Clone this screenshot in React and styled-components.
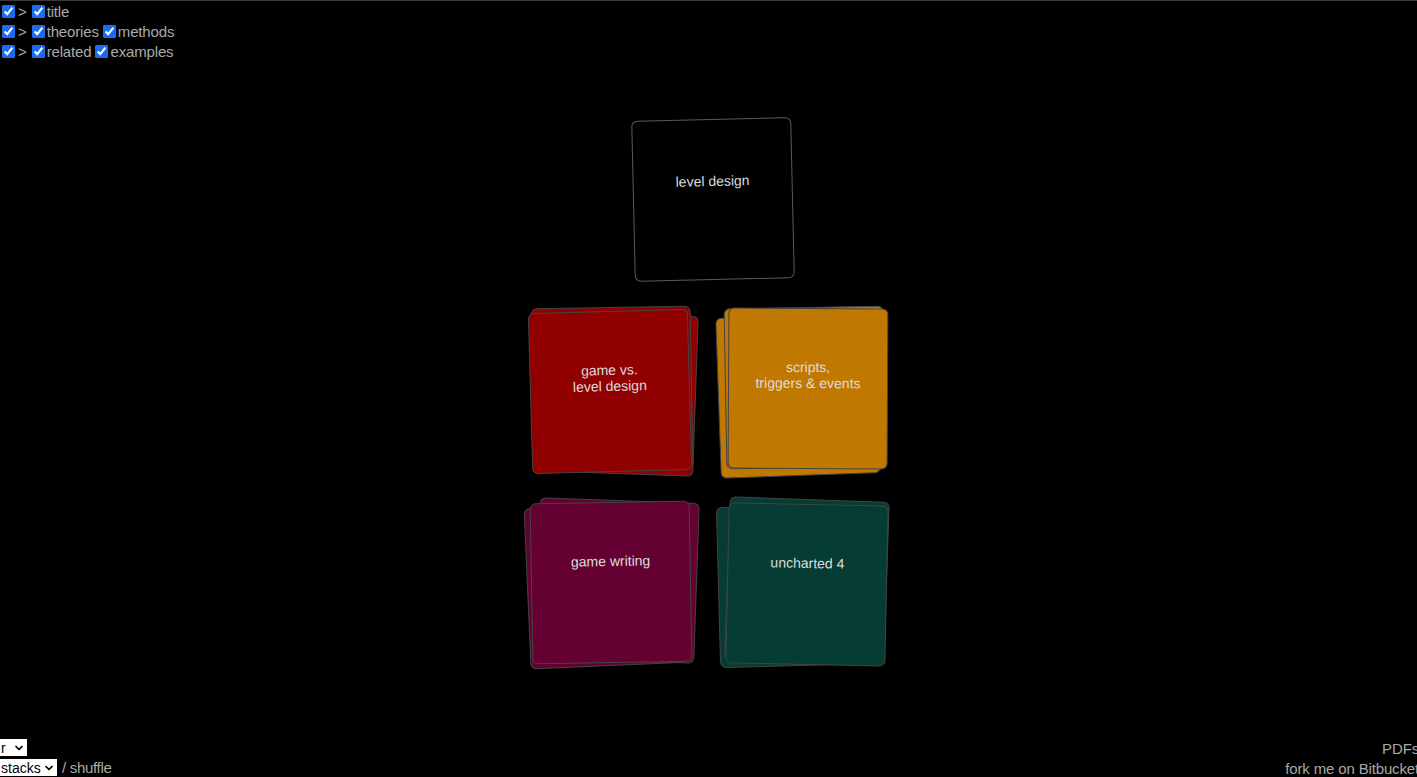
import React from "react";
import styled, { createGlobalStyle } from "styled-components";
import { ChevronDown } from "lucide-react";

const GlobalStyle = createGlobalStyle`
  html, body {
    margin: 0;
    padding: 0;
    background: #000;
  }
  body {
    font-family: "Liberation Sans", Arial, Helvetica, sans-serif;
    overflow: hidden;
  }
`;

const Page = styled.div`
  height: 100vh;
  box-sizing: border-box;
  border-top: 1px solid #3a3a3a;
  display: flex;
  flex-direction: column;
  overflow: hidden;
  color: #aaa;
  font-size: 15px;
`;

const Filters = styled.div`
  display: flex;
  flex-direction: column;
`;

const FilterRow = styled.div`
  display: flex;
  align-items: center;
  height: 20px;
  letter-spacing: -0.15px;
`;

const Check = styled.input.attrs({ type: "checkbox" })`
  width: 13px;
  height: 13px;
  margin: 0 2px 0 2px;
  accent-color: #1a6cf5;
`;

const Arrow = styled.span`
  margin: 0 3px 0 1px;
`;

const Label = styled.label`
  display: inline-flex;
  align-items: center;
  margin-right: 2px;
`;

const Board = styled.div`
  margin-top: 58px;
  display: flex;
  flex-direction: column;
  align-items: center;
  gap: 30px;
`;

const Grid = styled.div`
  display: grid;
  grid-template-columns: 160px 160px;
  column-gap: 31px;
  row-gap: 31px;
`;

const Stack = styled.div`
  position: relative;
  width: 160px;
  height: 161px;
`;

const Card = styled.div`
  box-sizing: border-box;
  width: 160px;
  height: 161px;
  border-radius: 6px;
  border: 1px solid ${p => (p.$bg ? "#444" : "#5a5a5a")};
  background: ${p => p.$bg || "#000"};
  color: #dcdcdc;
  font-size: 14px;
  line-height: 16px;
  text-align: center;
  padding: ${p => (p.$bg ? "50px" : "53px")} 8px 0;
  transform: ${p => p.$t || "none"};
`;

const StackCard = styled(Card)`
  position: absolute;
  inset: 0;
`;

const Bottom = styled.div`
  margin-top: auto;
  display: flex;
  justify-content: space-between;
  align-items: flex-end;
`;

const Left = styled.div`
  display: flex;
  flex-direction: column;
  gap: 3px;
  padding-bottom: 1px;
`;

const SelectRow = styled.div`
  display: flex;
  align-items: center;
  height: 17px;
  letter-spacing: -0.3px;
`;

const SelectBox = styled.div`
  position: relative;
  display: inline-flex;
  align-items: center;
  background: #fff;
  height: 17px;
  margin-right: 5px;

  svg {
    position: absolute;
    right: 2px;
    pointer-events: none;
    color: #000;
  }
`;

const Select = styled.select`
  appearance: none;
  border: none;
  background: transparent;
  color: #000;
  font-family: "Liberation Sans", Arial, sans-serif;
  font-size: 14px;
  height: 17px;
  min-width: ${p => p.$min || "0"};
  padding: 0 16px 0 1px;
  outline: none;
`;

const Right = styled.div`
  display: flex;
  flex-direction: column;
  align-items: flex-end;
  margin-right: -2px;
  margin-bottom: -2px;
  line-height: 20px;
  letter-spacing: -0.15px;
  color: #a8a8a8;
`;

const filters = [
  ["title"],
  ["theories", "methods"],
  ["related", "examples"]
];

const stacks = [
  {
    bg: "#910000",
    text: ["game vs.", "level design"],
    layers: ["translate(3px,3px) rotate(2deg)", "translate(-1px,-3px) rotate(-1deg)", "translate(-3px,1px) rotate(-1.6deg)"]
  },
  {
    bg: "#c17800",
    text: ["scripts,", "triggers & events"],
    layers: ["translate(-6px,5px) rotate(-2deg)", "translate(1px,-3px) rotate(-1deg)", "translate(4px,-2px) rotate(0.3deg)"]
  },
  {
    bg: "#640032",
    text: ["game writing"],
    layers: ["translate(-6px,3px) rotate(-2.5deg)", "translate(4px,-2px) rotate(2deg)", "translate(-2px,0px) rotate(-1deg)"]
  },
  {
    bg: "#053c34",
    text: ["uncharted 4"],
    layers: ["translate(-6px,3px) rotate(-1.5deg)", "translate(3px,-3px) rotate(2deg)", "translate(3px,2px) rotate(1.2deg)"]
  }
];

const App = () => (
  <>
    <GlobalStyle />
    <Page>
      <Filters>
        {filters.map((row, i) => (
          <FilterRow key={i}>
            <Check defaultChecked />
            <Arrow>&gt;</Arrow>
            {row.map(name => (
              <Label key={name}>
                <Check defaultChecked />
                {name}
              </Label>
            ))}
          </FilterRow>
        ))}
      </Filters>

      <Board>
        <Card $t="translateX(4px) rotate(-1.3deg)">level design</Card>
        <Grid>
          {stacks.map(s => (
            <Stack key={s.bg}>
              {s.layers.map((t, i) => (
                <StackCard key={i} $bg={s.bg} $t={t}>
                  {i === s.layers.length - 1 &&
                    s.text.map((line, j) => (
                      <React.Fragment key={j}>
                        {line}
                        {j < s.text.length - 1 && <br />}
                      </React.Fragment>
                    ))}
                </StackCard>
              ))}
            </Stack>
          ))}
        </Grid>
      </Board>

      <Bottom>
        <Left>
          <SelectRow>
            <SelectBox>
              <Select defaultValue="r" $min="27px">
                <option value="r">r</option>
              </Select>
              <ChevronDown size={12} strokeWidth={3.5} />
            </SelectBox>
          </SelectRow>
          <SelectRow>
            <SelectBox>
              <Select defaultValue="stacks">
                <option value="stacks">stacks</option>
              </Select>
              <ChevronDown size={12} strokeWidth={3.5} />
            </SelectBox>
            / shuffle
          </SelectRow>
        </Left>
        <Right>
          <span>PDFs</span>
          <span>fork me on Bitbucket</span>
        </Right>
      </Bottom>
    </Page>
  </>
);

export default App;
